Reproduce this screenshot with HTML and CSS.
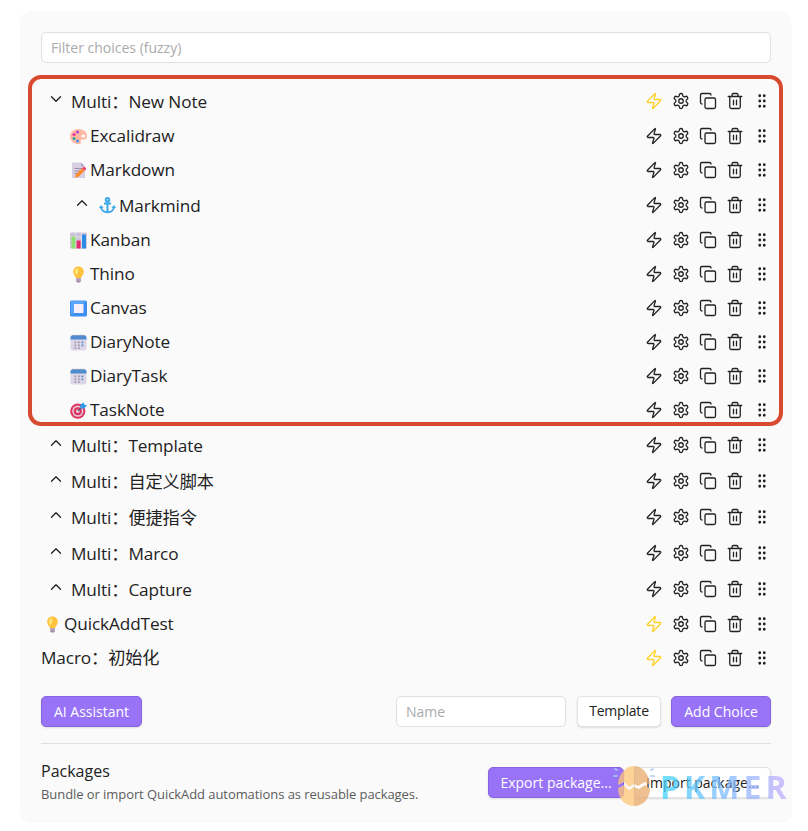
FILE: index.html
```html
<!DOCTYPE html>
<html lang="en">
<head>
  <meta charset="UTF-8">
  <meta name="viewport" content="width=device-width, initial-scale=1.0">
  <title>QuickAdd</title>
  <link rel="stylesheet" href="styles.css">
</head>
<body>
  <svg class="sprite">
    <symbol id="zap" viewBox="0 0 24 24"><path d="M4 14a1 1 0 0 1-.78-1.63l9.9-10.2a.5.5 0 0 1 .86.46l-1.92 6.02A1 1 0 0 0 13 10h7a1 1 0 0 1 .78 1.63l-9.9 10.2a.5.5 0 0 1-.86-.46l1.92-6.02A1 1 0 0 0 11 14z"/></symbol>
    <symbol id="gear" viewBox="0 0 24 24"><path d="M12.22 2h-.44a2 2 0 0 0-2 2v.18a2 2 0 0 1-1 1.73l-.43.25a2 2 0 0 1-2 0l-.15-.08a2 2 0 0 0-2.73.73l-.22.38a2 2 0 0 0 .73 2.73l.15.1a2 2 0 0 1 1 1.72v.51a2 2 0 0 1-1 1.74l-.15.09a2 2 0 0 0-.73 2.73l.22.38a2 2 0 0 0 2.73.73l.15-.08a2 2 0 0 1 2 0l.43.25a2 2 0 0 1 1 1.73V20a2 2 0 0 0 2 2h.44a2 2 0 0 0 2-2v-.18a2 2 0 0 1 1-1.73l.43-.25a2 2 0 0 1 2 0l.15.08a2 2 0 0 0 2.73-.73l.22-.39a2 2 0 0 0-.73-2.73l-.15-.08a2 2 0 0 1-1-1.74v-.5a2 2 0 0 1 1-1.74l.15-.09a2 2 0 0 0 .73-2.73l-.22-.38a2 2 0 0 0-2.73-.73l-.15.08a2 2 0 0 1-2 0l-.43-.25a2 2 0 0 1-1-1.73V4a2 2 0 0 0-2-2z"/><circle cx="12" cy="12" r="3"/></symbol>
    <symbol id="copy" viewBox="0 0 24 24"><rect x="8" y="8" width="14" height="14" rx="2"/><path d="M4 16c-1.1 0-2-.9-2-2V4c0-1.1.9-2 2-2h10c1.1 0 2 .9 2 2"/></symbol>
    <symbol id="trash" viewBox="0 0 24 24"><path d="M3 6h18M19 6v14c0 1-1 2-2 2H7c-1 0-2-1-2-2V6M8 6V4c0-1 1-2 2-2h4c1 0 2 1 2 2v2M10 11v6M14 11v6"/></symbol>
    <symbol id="grip" viewBox="0 0 24 24"><circle cx="9" cy="5" r="1"/><circle cx="15" cy="5" r="1"/><circle cx="9" cy="12" r="1"/><circle cx="15" cy="12" r="1"/><circle cx="9" cy="19" r="1"/><circle cx="15" cy="19" r="1"/></symbol>
    <symbol id="down" viewBox="0 0 24 24"><path d="m6 9 6 6 6-6"/></symbol>
    <symbol id="up" viewBox="0 0 24 24"><path d="m18 15-6-6-6 6"/></symbol>

    <symbol id="palette" viewBox="0 0 17 17"><path fill="#ffb8a2" d="M8.500 1C13 1 17 4 17 8c0 3-2 4-5 3.600-1.500-.2-1.600.8-1.200 2 .5 1.600-.2 2.600-1.800 2.600C4 16 0 13 0 8.500 0 4 4 1 8.500 1z"/><ellipse cx="13.300" cy="8" rx="2" ry="1.600" fill="#fff"/><circle cx="7.500" cy="4" r="1.600" fill="#b04ae0"/><circle cx="4" cy="6.500" r="1.600" fill="#f0389a"/><circle cx="4" cy="10.400" r="1.500" fill="#2aa9a0"/><circle cx="7.500" cy="13" r="1.500" fill="#3f8df0"/></symbol>
    <symbol id="memo" viewBox="0 0 17 17"><path fill="#d9cfe3" d="M2 .5h9l4 4V16H2z"/><path fill="#b3a5c4" d="M11 .5v4h4z"/><path stroke="#9b8faa" d="M4.500 6.500h8M4.500 9h6M4.500 11.500h4"/><path fill="#ff8a2a" d="m5 15.500 1-3.200 6-6 2.500 2.500-6 6z"/><path fill="#f0476a" d="m12 6.300 1.600-1.300c1.500-.4 3 1 2.300 2.400l-1.400 1.400z"/></symbol>
    <symbol id="anchor" viewBox="0 0 17 17"><g fill="none" stroke="#3ea7ea" stroke-width="2"><circle cx="8.500" cy="2.700" r="1.700"/><path d="M8.500 4.500V15M5 6.500h7M2 9.500c0 3.500 3 5.700 6.500 5.700S15 13 15 9.500"/></g><path fill="#3ea7ea" d="m0 11 2-3 2.600 3zM12.400 11 15 8l2 3z"/></symbol>
    <symbol id="chart" viewBox="0 0 17 17"><rect y=".5" width="17" height="16" rx="1.500" fill="#cdc3d8"/><path stroke="#ede8f2" stroke-width=".7" d="M0 5h17M0 9h17M0 13h17M5.700 1v15M11.400 1v15"/><path fill="#8ee070" d="M1.500 4.500h4v12h-4z"/><path fill="#e32b6c" d="M6.600 8.500h4v8h-4z"/><path fill="#2c8be4" d="M12 2.500h4v14h-4z"/></symbol>
    <symbol id="bulb" viewBox="0 0 17 17"><path fill="#ffc23c" d="M8.500.5c3 0 5.300 2.200 5.300 5.200 0 3-2.300 4-2.900 6.600H6.100C5.500 9.700 3.200 8.700 3.200 5.700 3.200 2.700 5.500.5 8.500.5z"/><path fill="#ffe477" d="M8 2c-2 .2-3.300 1.700-3.200 3.700.1 1.400 1 2.200 1.700 3.500C8 8 9 5 8 2z"/><path fill="#a18ba8" d="M6.200 12.200h4.600v3c0 .8-.8 1.300-2.300 1.300s-2.300-.5-2.300-1.300z"/><path stroke="#d5c6da" stroke-width=".7" d="M6.200 14h4.600"/></symbol>
    <symbol id="square" viewBox="0 0 17 17"><rect y=".5" width="17" height="16" rx="1.500" fill="#3d8ef0"/><path fill="#58a7fb" d="M1 1h15l-3 3H4v9l-3 2z"/><rect x="4" y="4" width="9.500" height="9" rx=".6" fill="#f8effc"/></symbol>
    <symbol id="calendar" viewBox="0 0 17 17"><rect x=".5" y="1" width="16" height="15.500" rx="2.500" fill="#dcd6e6"/><path fill="#4b8bd0" d="M.5 5.500V4c0-1.500 1-2.700 2.500-2.700h11c1.500 0 2.500 1.200 2.500 2.700v1.500z"/><path stroke="#8f9cb1" stroke-width="1.500" stroke-dasharray="1 1.500" d="M2.500 1.400h12"/><g fill="#a29cb4"><path d="M4.500 7.500h1.800v1.800H4.500zM8 7.500h1.800v1.800H8zM4.500 10.500h1.800v1.800H4.500zM8 10.500h1.800v1.800H8zM4.500 13.200h1.800V15H4.500zM8 13.200h1.800V15H8z"/><path fill="#5a8fd0" d="M11.500 7.500h1.800v1.800h-1.800zM11.500 10.500h1.800v1.800h-1.800z"/></g></symbol>
    <symbol id="target" viewBox="0 0 17 17"><circle cx="7.800" cy="9.200" r="7.600" fill="#de3560"/><circle cx="7.800" cy="9.200" r="5.600" fill="#e9c6d8"/><circle cx="7.800" cy="9.200" r="4" fill="#de3560"/><circle cx="7.800" cy="9.200" r="1.800" fill="#f2d9e6"/><path stroke="#5e5574" stroke-width="1.200" d="m8 9 4-4"/><path fill="#319be8" d="m10 3.500 3.300-3.300 1 2.300 2.700 1-3.400 3.300-3-.5z"/></symbol>
  </svg>

  <div class="settings">
    <input class="filter" type="text" placeholder="Filter choices (fuzzy)">
    <div class="choices"></div>
    <div class="highlight"></div>

    <div class="add-bar">
      <button class="btn primary ai">AI Assistant</button>
      <input class="name" type="text" placeholder="Name">
      <button class="btn type">Template</button>
      <button class="btn primary add">Add Choice</button>
    </div>

    <div class="packages">
      <div class="info">
        <div class="title">Packages</div>
        <div class="desc">Bundle or import QuickAdd automations as reusable packages.</div>
      </div>
      <button class="btn primary export">Export package...</button>
      <button class="btn import">Import package...</button>
    </div>

    <div class="watermark">
      <svg class="egg" viewBox="0 0 44 42">
        <path fill="#ffc678" d="M22 1C12 1 6 12 6 20l6-3 5 5 5-3z"/>
        <path fill="#e9aa6b" d="M22 1c10 0 16 11 16 19l-5-3-7 4-4-2z"/>
        <path fill="#ffc678" d="M6 23c0 10 6 18 16 18V22l-5 3-5-5z"/>
        <path fill="#e9aa6b" d="M38 23c0 10-6 18-16 18V22l5 2 6-4z"/>
        <path stroke="#a9cdf2" stroke-width="2" stroke-linecap="round" d="m3 4 2 1M2 11h3M39 5l2-1M39 11h3"/>
      </svg>
      <span>PKMER</span>
    </div>
  </div>

  <script>
    const choices=[
      {name:'Multi：New Note',fold:'down',on:true},
      {name:'Excalidraw',icon:'palette',nested:true},
      {name:'Markdown',icon:'memo',nested:true},
      {name:'Markmind',icon:'anchor',fold:'up',nested:true},
      {name:'Kanban',icon:'chart',nested:true},
      {name:'Thino',icon:'bulb',nested:true},
      {name:'Canvas',icon:'square',nested:true},
      {name:'DiaryNote',icon:'calendar',nested:true},
      {name:'DiaryTask',icon:'calendar',nested:true},
      {name:'TaskNote',icon:'target',nested:true},
      {name:'Multi：Template',fold:'up'},
      {name:'Multi：自定义脚本',fold:'up'},
      {name:'Multi：便捷指令',fold:'up'},
      {name:'Multi：Marco',fold:'up'},
      {name:'Multi：Capture',fold:'up'},
      {name:'QuickAddTest',icon:'bulb',on:true},
      {name:'Macro：初始化',on:true}
    ]

    const svg=(id,cls)=>`<svg class="${cls}"><use href="#${id}"/></svg>`

    document.querySelector('.choices').innerHTML=choices.map(c=>`
      <div class="choice${c.fold?' multi':''}${c.nested?' nested':''}">
        ${c.fold?svg(c.fold,'icon fold'):''}
        ${c.icon?svg(c.icon,'emoji'):''}
        <span class="label">${c.name}</span>
        <div class="actions">
          ${svg('zap',c.on?'icon on':'icon')}
          ${['gear','copy','trash','grip'].map(id=>svg(id,'icon')).join('')}
        </div>
      </div>`).join('')
  </script>
</body>
</html>
```
FILE: styles.css
```css
*{
  box-sizing: border-box;
}

body{
  margin: 0;
  padding: 11px 16px 8px 20px;
  background: #fff;
  color: #222;
  font-family: "Open Sans", "Noto Sans CJK SC", sans-serif;
}

.sprite{
  position: absolute;
  width: 0;
  height: 0;
}

.settings{
  position: relative;
  height: 812px;
  padding: 21px;
  background: #fafafa;
  border-radius: 12px;
}

input{
  height: 31px;
  padding: 0 9px;
  border: 1px solid #e0e0e0;
  border-radius: 5px;
  background: #fff;
  font-family: inherit;
  font-size: 14px;
}

input::placeholder{
  color: #ababab;
}

.filter{
  display: block;
  width: 100%;
}

.choices{
  margin-top: 20px;
}

.choice{
  display: flex;
  align-items: center;
  height: 34px;
  padding-right: .5px;
}

.multi{
  height: 36px;
}

.nested{
  padding-left: 26px;
}

.icon{
  width: 18px;
  height: 18px;
  fill: none;
  stroke: #222;
  stroke-width: 1.75;
  stroke-linecap: round;
  stroke-linejoin: round;
}

.icon.on{
  stroke: #ffd026;
}

.fold{
  margin: 0 6px 4px;
}

.emoji{
  width: 17px;
  height: 17px;
  margin: 1px 3px 0 3px;
}

.label{
  font-size: 17.2px;
  line-height: 24px;
  letter-spacing: -0.1px;
  margin-top: -1px;
}

.multi .emoji{
  margin-left: 2px;
}

.multi .label{
  margin-top: 2px;
}

.actions{
  display: flex;
  gap: 9px;
  margin-left: auto;
}

/* frame around the expanded group */
.highlight{
  position: absolute;
  left: 8px;
  right: 9px;
  top: 64px;
  height: 351px;
  border: 4px solid #d84a2f;
  border-radius: 13px;
  pointer-events: none;
}

.add-bar{
  display: flex;
  margin-top: 21px;
  padding-bottom: 16px;
  border-bottom: 1px solid #e0e0e0;
}

.name{
  width: 170px;
  margin: 0 11px 0 auto;
}

.btn{
  height: 31px;
  padding: 0;
  border: 1px solid #e3e3e3;
  border-radius: 5px;
  background: #fff;
  box-shadow: 0 1px 2px rgba(0, 0, 0, 0.12);
  color: #222;
  font-family: inherit;
  font-size: 14px;
  letter-spacing: 0;
  white-space: nowrap;
}

.primary{
  border-color: #8a63e0;
  background: #9873f7;
  color: #fff;
}

.ai{
  width: 101px;
}

.type{
  width: 84px;
  margin-right: 10px;
  padding-bottom: 2px;
  letter-spacing: -0.2px;
}

.add{
  width: 100px;
}

.packages{
  display: flex;
  align-items: center;
  margin-top: 15px;
}

.info{
  flex: 1;
}

.title{
  font-size: 16px;
  line-height: 24px;
}

.desc{
  color: #5c5c5c;
  font-size: 13px;
  line-height: 22px;
  letter-spacing: -0.07px;
}

.export{
  width: 136px;
  margin-right: 10px;
}

.import{
  width: 137px;
}

.watermark{
  position: absolute;
  left: 592px;
  top: 754px;
  display: flex;
  align-items: center;
  opacity: 0.75;
  pointer-events: none;
}

.egg{
  width: 44px;
  height: 42px;
  fill: none;
}

.watermark span{
  margin: 2px 0 0 4px;
  background: linear-gradient(90deg, #3fd4ff, #7fbcff 50%, #c8adff);
  -webkit-background-clip: text;
  background-clip: text;
  color: transparent;
  font-size: 32px;
  font-weight: 700;
  line-height: 40px;
  letter-spacing: 4px;
}
```
